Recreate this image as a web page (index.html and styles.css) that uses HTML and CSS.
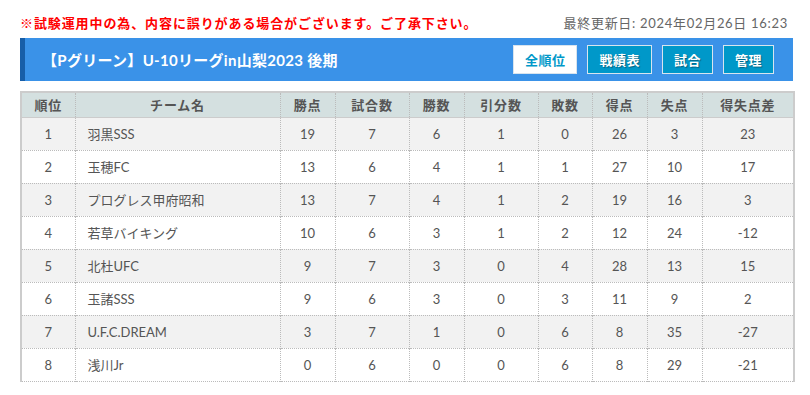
FILE: index.html
```html
<!DOCTYPE html>
<html lang="ja">
<head>
<meta charset="utf-8">
<title>順位表</title>
<link rel="stylesheet" href="styles.css">
</head>
<body>
<div class="page">
  <div class="topline">
    <p class="notice">※試験運用中の為、内容に誤りがある場合がございます。ご了承下さい。</p>
    <p class="updated">最終更新日: 2024年02月26日 16:23</p>
  </div>
  <div class="titlebar">
    <h1 class="title">【Pグリーン】U-10リーグin山梨2023 後期</h1>
    <nav class="buttons">
      <a class="btn btn-active">全順位</a>
      <a class="btn">戦績表</a>
      <a class="btn">試合</a>
      <a class="btn">管理</a>
    </nav>
  </div>
  <table class="standings">
    <colgroup>
      <col class="c-rank"><col class="c-team"><col class="c-pts"><col class="c-gp"><col class="c-w"><col class="c-d"><col class="c-l"><col class="c-gf"><col class="c-ga"><col class="c-gd">
    </colgroup>
    <thead>
      <tr><th>順位</th><th>チーム名</th><th>勝点</th><th>試合数</th><th>勝数</th><th>引分数</th><th>敗数</th><th>得点</th><th>失点</th><th>得失点差</th></tr>
    </thead>
    <tbody>
      <tr><td>1</td><td class="team">羽黒SSS</td><td>19</td><td>7</td><td>6</td><td>1</td><td>0</td><td>26</td><td>3</td><td>23</td></tr>
      <tr><td>2</td><td class="team">玉穂FC</td><td>13</td><td>6</td><td>4</td><td>1</td><td>1</td><td>27</td><td>10</td><td>17</td></tr>
      <tr><td>3</td><td class="team">プログレス甲府昭和</td><td>13</td><td>7</td><td>4</td><td>1</td><td>2</td><td>19</td><td>16</td><td>3</td></tr>
      <tr><td>4</td><td class="team">若草バイキング</td><td>10</td><td>6</td><td>3</td><td>1</td><td>2</td><td>12</td><td>24</td><td>-12</td></tr>
      <tr><td>5</td><td class="team">北杜UFC</td><td>9</td><td>7</td><td>3</td><td>0</td><td>4</td><td>28</td><td>13</td><td>15</td></tr>
      <tr><td>6</td><td class="team">玉諸SSS</td><td>9</td><td>6</td><td>3</td><td>0</td><td>3</td><td>11</td><td>9</td><td>2</td></tr>
      <tr><td>7</td><td class="team">U.F.C.DREAM</td><td>3</td><td>7</td><td>1</td><td>0</td><td>6</td><td>8</td><td>35</td><td>-27</td></tr>
      <tr><td>8</td><td class="team">浅川Jr</td><td>0</td><td>6</td><td>0</td><td>0</td><td>6</td><td>8</td><td>29</td><td>-21</td></tr>
    </tbody>
  </table>
</div>
</body>
</html>
```

FILE: styles.css
```css
* { box-sizing: border-box; }
html, body { margin: 0; padding: 0; background: #fff; }
body {
  font-family: Lato, "Noto Sans CJK JP", sans-serif;
  color: #555;
}
.page {
  width: 773px;
  margin-left: 20px;
}
.topline {
  display: flex;
  justify-content: space-between;
  align-items: center;
  height: 38px;
  padding-top: 6px;
}
.notice {
  margin: 0;
  color: #ff0000;
  font-size: 13px;
  font-weight: bold;
  letter-spacing: 0.9px;
  font-family: "Noto Sans CJK JP", sans-serif;
}
.updated {
  margin: 0 5px 0 0;
  color: #666;
  font-size: 13px;
  font-family: Lato, "Noto Sans CJK JP", sans-serif;
  letter-spacing: 0.7px;
}
.titlebar {
  display: flex;
  align-items: center;
  justify-content: space-between;
  height: 43px;
  background: #3a92e8;
  border-left: 5px solid #175ea8;
  padding: 0 19px 0 17px;
}
.title {
  margin: 0;
  color: #fff;
  font-size: 15px;
  font-weight: bold;
  font-family: Lato, "Noto Sans CJK JP", sans-serif;
  letter-spacing: 0.3px;
}
.buttons {
  display: flex;
  gap: 10px;
}
.btn {
  display: flex;
  align-items: center;
  height: 29px;
  padding: 0 11px;
  border: 1px solid #d8e4ee;
  background: #0098c9;
  color: #fff;
  font-size: 13px;
  font-weight: bold;
  font-family: "Noto Sans CJK JP", sans-serif;
  text-shadow: 1px 1px 1px rgba(0,0,0,0.35);
  letter-spacing: 0.5px;
}
.btn-active {
  background: #fff;
  color: #0098c9;
  text-shadow: none;
}
.standings {
  margin-top: 10px;
  width: 773px;
  border-collapse: collapse;
  table-layout: fixed;
  font-size: 13px;
  border-left: 2px solid #ccc;
  border-right: 2px solid #ccc;
  border-top: 2px solid #ccc;
  border-bottom: 1px dotted #bbb;
}
.c-rank { width: 54px; }
.c-team { width: 205px; }
.c-pts { width: 55px; }
.c-gp { width: 74px; }
.c-w { width: 55px; }
.c-d { width: 74px; }
.c-l { width: 54px; }
.c-gf { width: 55px; }
.c-ga { width: 55px; }
.c-gd { width: 92px; }
.standings th {
  height: 25px;
  background: #d4e0e0;
  color: #555;
  font-weight: bold;
  font-family: "Noto Sans CJK JP", sans-serif;
  font-size: 13px;
  letter-spacing: 0.8px;
  border-left: 1px dotted #bbb;
  border-bottom: 1px solid #ccc;
  padding: 0;
}
.standings td {
  height: 33px;
  text-align: center;
  border-left: 1px dotted #bbb;
  border-top: 1px dotted #bbb;
  padding: 0;
  color: #555;
}
.standings th:first-child, .standings td:first-child { border-left: none; }
.standings tbody tr:first-child td { border-top: none; }
.standings tbody tr:nth-child(odd) td { background: #f2f2f2; }
.standings td.team {
  text-align: left;
  padding-left: 12px;
}
```
